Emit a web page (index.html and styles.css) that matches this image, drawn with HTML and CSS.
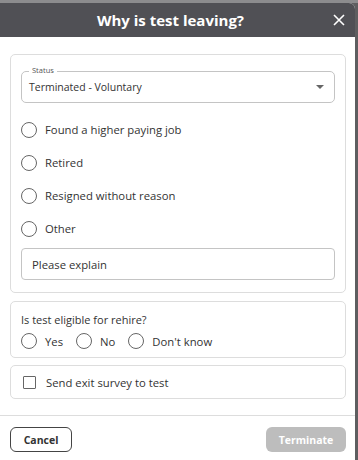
FILE: index.html
```html
<!DOCTYPE html>
<html lang="en">
  <head>
    <meta charset="UTF-8" />
    <meta name="viewport" content="width=device-width, initial-scale=1.0" />
    <title>Why is test leaving?</title>
    <link rel="stylesheet" href="styles.css">
  </head>
  <body>
    <div class="modal">
      <div class="modal-header">
        <h2>Why is test leaving?</h2>
        <span class="close">
          <svg width="12" height="12" viewBox="0 0 12 12">
            <path d="M1 1 L11 11 M11 1 L1 11" stroke="#ffffff" stroke-width="1.6" />
          </svg>
        </span>
      </div>

      <div class="modal-body">
        <div class="card reasons">
          <div class="select">
            <span class="select-label">Status</span>
            <span>Terminated - Voluntary</span>
            <span class="caret"></span>
          </div>

          <ul class="options">
            <li><span class="radio"></span>Found a higher paying job</li>
            <li><span class="radio"></span>Retired</li>
            <li><span class="radio"></span>Resigned without reason</li>
            <li><span class="radio"></span>Other</li>
          </ul>

          <div class="textbox">Please explain</div>
        </div>

        <div class="card rehire">
          <p>Is test eligible for rehire?</p>
          <ul class="inline-options">
            <li><span class="radio"></span>Yes</li>
            <li><span class="radio"></span>No</li>
            <li><span class="radio"></span>Don't know</li>
          </ul>
        </div>

        <div class="card survey">
          <span class="checkbox"></span>
          Send exit survey to test
        </div>
      </div>

      <div class="modal-footer">
        <button class="btn-cancel">Cancel</button>
        <button class="btn-terminate">Terminate</button>
      </div>
    </div>
  </body>
</html>
```

FILE: styles.css
```css
* {
  margin: 0;
  padding: 0;
  box-sizing: border-box;
}
body {
  width: 358px;
  height: 460px;
  background-color: #5e5e60;
  border-top: 3px solid #8c8c8e;
  font-family: "Open Sans", "Noto Sans", sans-serif;
  color: #333333;
  overflow: hidden;
}
.modal {
  width: 355px;
  height: 457px;
  background-color: #ffffff;
  border-top-right-radius: 6px;
  display: flex;
  flex-direction: column;
}
.modal-header {
  height: 34px;
  background-color: #505055;
  border-top-right-radius: 6px;
  display: flex;
  align-items: center;
  justify-content: center;
  padding-right: 14px;
  position: relative;
}
.modal-header h2 {
  color: #ffffff;
  font-size: 15px;
  font-weight: 700;
}
.close {
  position: absolute;
  right: 10px;
  top: 11px;
  display: flex;
}
.modal-body {
  padding: 17px 9px 16px 10px;
  display: flex;
  flex-direction: column;
  gap: 8px;
  border-bottom: 1px solid #dddddd;
}
.card {
  border: 1px solid #dddddd;
  border-radius: 5px;
}
.reasons {
  padding: 16px 10px 12px 10px;
}
.select {
  height: 32px;
  border: 1px solid #c4c4c4;
  border-radius: 5px;
  display: flex;
  align-items: center;
  padding: 0 7px;
  font-size: 10.5px;
  position: relative;
}
.select-label {
  position: absolute;
  left: 7px;
  top: -7px;
  font-size: 7.5px;
  background-color: #ffffff;
  padding: 0 3px;
  color: #555555;
}
.caret {
  margin-left: auto;
  margin-right: 3px;
  border-left: 4px solid transparent;
  border-right: 4px solid transparent;
  border-top: 4px solid #666666;
}
ul {
  list-style: none;
}
.options {
  margin-top: 10px;
}
.options li {
  height: 33px;
  display: flex;
  align-items: center;
  font-size: 11.3px;
}
.radio {
  width: 16px;
  height: 16px;
  border: 1.5px solid #666666;
  border-radius: 50%;
  margin-right: 8px;
  flex-shrink: 0;
}
.textbox {
  margin-top: 3px;
  height: 32px;
  border: 1px solid #c4c4c4;
  border-radius: 4px;
  display: flex;
  align-items: center;
  padding: 0 10px;
  font-size: 11.3px;
}
.rehire {
  padding: 10px 10px 8px 10px;
}
.rehire p {
  font-size: 11px;
  margin-bottom: 6px;
}
.inline-options {
  display: flex;
  gap: 13px;
}
.inline-options li {
  display: flex;
  align-items: center;
  font-size: 11.3px;
}
.survey {
  height: 34px;
  display: flex;
  align-items: center;
  padding: 0 12px;
  font-size: 11.3px;
  margin-top: -1px;
}
.checkbox {
  width: 13px;
  height: 13px;
  border: 1.5px solid #666666;
  border-radius: 1px;
  margin-right: 10px;
}
.modal-footer {
  padding: 11px 9px 0 10px;
  display: flex;
  justify-content: space-between;
}
button {
  height: 25px;
  border-radius: 6px;
  font-family: "Open Sans", sans-serif;
  font-size: 10.5px;
  font-weight: 700;
}
.btn-cancel {
  width: 62px;
  background-color: #ffffff;
  border: 1px solid #444444;
  color: #333333;
}
.btn-terminate {
  width: 80px;
  background-color: #bdbdbd;
  border: none;
  color: #ffffff;
}
```
